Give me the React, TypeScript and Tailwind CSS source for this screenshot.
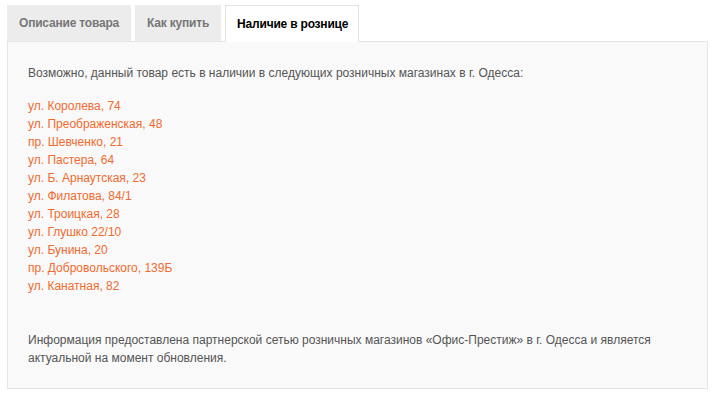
import React from "react";

const stores = [
  "ул. Королева, 74",
  "ул. Преображенская, 48",
  "пр. Шевченко, 21",
  "ул. Пастера, 64",
  "ул. Б. Арнаутская, 23",
  "ул. Филатова, 84/1",
  "ул. Троицкая, 28",
  "ул. Глушко 22/10",
  "ул. Бунина, 20",
  "пр. Добровольского, 139Б",
  "ул. Канатная, 82",
];

const tabs = ["Описание товара", "Как купить", "Наличие в рознице"];

const App = () => {
  const active = 2;

  return (
    <div className="w-[715px] h-[397px] bg-white pt-[5px] px-[7px] font-['Liberation_Sans',Arial,sans-serif] text-[12px]">
      <div className="flex gap-[4px] relative z-10">
        {tabs.map((tab, i) => (
          <div
            key={tab}
            className={
              i === active
                ? "h-[37px] pl-[11px] pr-[10px] flex items-center font-bold tracking-[-0.2px] text-black bg-white border border-[#e3e3e3] border-b-0 -mb-px"
                : "h-[36px] px-[12px] flex items-center font-bold tracking-[-0.2px] text-[#777] bg-[#ececec]"
            }
          >
            {tab}
          </div>
        ))}
      </div>
      <div className="bg-[#f9f9f9] border border-[#e5e5e5] w-[701px] h-[348px] pt-[22px] px-[20px] text-[#555] leading-[18px]">
        <p>
          Возможно, данный товар есть в наличии в следующих розничных магазинах
          в г. Одесса:
        </p>
        <ul className="mt-[15px] text-[#f26a2e]">
          {stores.map((store) => (
            <li key={store}>{store}</li>
          ))}
        </ul>
        <p className="mt-[36px]">
          Информация предоставлена партнерской сетью розничных магазинов
          «Офис-Престиж» в г. Одесса и является актуальной на момент
          обновления.
        </p>
      </div>
    </div>
  );
};

export default App;
